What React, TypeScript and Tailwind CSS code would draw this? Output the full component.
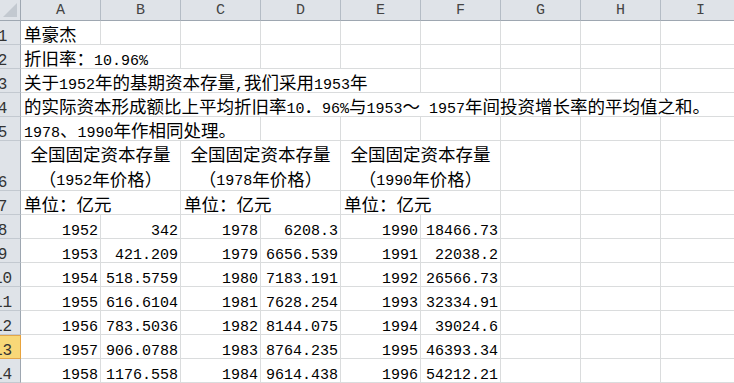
import React from "react";
import clsx from "clsx";

const LETTERS = ["A", "B", "C", "D", "E", "F", "G", "H", "I"];

const WIDTH: Record<number, string> = {
  1: "w-[80px]",
  2: "w-[160px]",
  3: "w-[240px]",
  5: "w-[400px]",
  9: "w-[720px]",
};

const DATA = [
  ["1952", "342", "1978", "6208.3", "1990", "18466.73"],
  ["1953", "421.209", "1979", "6656.539", "1991", "22038.2"],
  ["1954", "518.5759", "1980", "7183.191", "1992", "26566.73"],
  ["1955", "616.6104", "1981", "7628.254", "1993", "32334.91"],
  ["1956", "783.5036", "1982", "8144.075", "1994", "39024.6"],
  ["1957", "906.0788", "1983", "8764.235", "1995", "46393.34"],
  ["1958", "1176.558", "1984", "9614.438", "1996", "54212.21"],
];

// latin runs get the narrow mono face, the rest stays CJK
const Txt = ({ s }: { s: string }) => (
  <>
    {s.split(/([\x20-\x7e]+)/).map((p, i) =>
      /^[\x20-\x7e]+$/.test(p) ? (
        <span
          key={i}
          className="font-['Liberation_Mono',monospace] text-[15px] leading-[10px] align-[1px]"
        >
          {p}
        </span>
      ) : (
        p
      ),
    )}
  </>
);

const Cell = ({
  span = 1,
  right,
  text,
}: {
  span?: number;
  right?: boolean;
  text?: string;
}) => (
  <div
    className={clsx(
      "shrink-0 h-full flex items-end whitespace-pre border-r border-b border-[#dadcdd] pb-px leading-[18px] overflow-hidden",
      WIDTH[span],
      right ? "justify-end pr-[2px]" : "pl-[3px]",
    )}
  >
    {text && <Txt s={text} />}
  </div>
);

const Empty = ({ count }: { count: number }) => (
  <>
    {Array.from({ length: count }).map((_, i) => (
      <Cell key={i} />
    ))}
  </>
);

const RowHead = ({ n, sel }: { n: number; sel?: boolean }) => (
  <div
    className={clsx(
      "shrink-0 w-[21px] h-full flex items-end overflow-hidden border-r border-b font-['Liberation_Mono',monospace] text-[16px] leading-[14px] text-[#333]",
      sel
        ? "bg-[#f8d878] border-r-[#e8a33d] border-b-[#e2a64b] shadow-[inset_0_1px_0_#e2a64b]"
        : "bg-[#dfe3e8] border-r-[#9ea7b1] border-b-[#c3c9d0]",
    )}
  >
    <div className="-ml-4 w-[37px] shrink-0 text-center">{n}</div>
  </div>
);

const Row = ({
  n,
  tall,
  sel,
  children,
}: {
  n: number;
  tall?: boolean;
  sel?: boolean;
  children: React.ReactNode;
}) => (
  <div className={clsx("flex shrink-0", tall ? "h-[50px]" : "h-[24px]")}>
    <RowHead n={n} sel={sel} />
    {children}
  </div>
);

const Merged = ({ title, price }: { title: string; price: string }) => (
  <div className="shrink-0 w-[160px] h-full flex flex-col items-center justify-end gap-[7px] pb-[2px] leading-[18px] border-r border-b border-[#dadcdd] whitespace-pre">
    <div>{title}</div>
    <div>
      <Txt s={price} />
    </div>
  </div>
);

const App = () => {
  return (
    <div className="w-[734px] h-[383px] overflow-hidden bg-white text-black text-[17.5px] font-['Noto_Sans_CJK_SC',sans-serif]">
      <div className="flex h-[21px]">
        <div className="shrink-0 w-[21px] h-full bg-[#dfe3e8] border-r border-b border-[#9ea7b1]">
          <svg width="20" height="20" viewBox="0 0 20 20">
            <polygon points="17,3 17,17 3,17" fill="#c3c9d0" />
          </svg>
        </div>
        {LETTERS.map((l) => (
          <div
            key={l}
            className="shrink-0 w-[80px] h-full bg-[#dfe3e8] border-r border-r-[#b4bcc5] border-b border-b-[#9ea7b1] pt-1 text-center leading-[14px] text-[15px] text-[#444] font-['Liberation_Mono',monospace]"
          >
            {l}
          </div>
        ))}
      </div>

      <Row n={1}>
        <Cell text="单豪杰" />
        <Empty count={8} />
      </Row>
      <Row n={2}>
        <Cell span={2} text="折旧率：10.96%" />
        <Empty count={7} />
      </Row>
      <Row n={3}>
        <Cell span={5} text="关于1952年的基期资本存量,我们采用1953年" />
        <Empty count={4} />
      </Row>
      <Row n={4}>
        <Cell
          span={9}
          text="的实际资本形成额比上平均折旧率10．96%与1953～ 1957年间投资增长率的平均值之和。"
        />
      </Row>
      <Row n={5}>
        <Cell span={3} text="1978、1990年作相同处理。" />
        <Empty count={6} />
      </Row>
      <Row n={6} tall>
        <Merged title="全国固定资本存量" price="（1952年价格）" />
        <Merged title="全国固定资本存量" price="（1978年价格）" />
        <Merged title="全国固定资本存量" price="（1990年价格）" />
        <Empty count={3} />
      </Row>
      <Row n={7}>
        <Cell span={2} text="单位：亿元" />
        <Cell span={2} text="单位：亿元" />
        <Cell span={2} text="单位：亿元" />
        <Empty count={3} />
      </Row>
      {DATA.map((r, i) => (
        <Row key={i} n={8 + i} sel={8 + i === 13}>
          {r.map((v, j) => (
            <Cell key={j} right text={v} />
          ))}
          <Empty count={3} />
        </Row>
      ))}
    </div>
  );
};

export default App;
